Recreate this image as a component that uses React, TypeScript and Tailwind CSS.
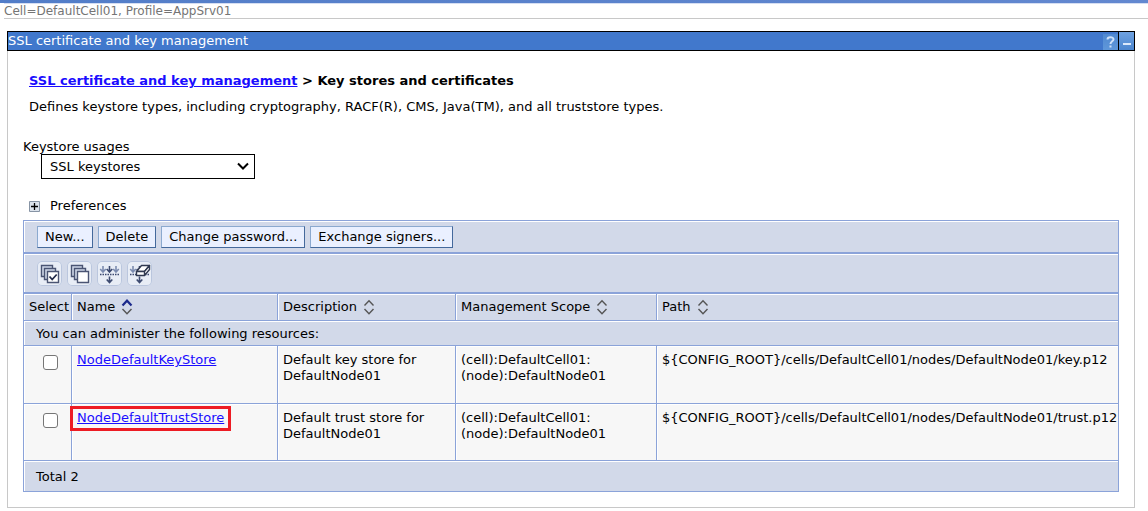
import React from "react";

type Sort = "asc" | "none";

const columns: { name: string; sort: Sort }[] = [
  { name: "Name", sort: "asc" },
  { name: "Description", sort: "none" },
  { name: "Management Scope", sort: "none" },
  { name: "Path", sort: "none" },
];

const rows = [
  {
    name: "NodeDefaultKeyStore",
    description: "Default key store for DefaultNode01",
    path: "${CONFIG_ROOT}/cells/DefaultCell01/nodes/DefaultNode01/key.p12",
    marked: false,
  },
  {
    name: "NodeDefaultTrustStore",
    description: "Default trust store for DefaultNode01",
    path: "${CONFIG_ROOT}/cells/DefaultCell01/nodes/DefaultNode01/trust.p12",
    marked: true,
  },
];

const actions = ["New...", "Delete", "Change password...", "Exchange signers..."];

function SortIcon({ sort }: { sort: Sort }) {
  return (
    <svg width="12" height="16" viewBox="0 0 12 16" fill="none" strokeWidth="1.4" aria-hidden="true">
      <path d="M1.5 6.500 6 1.700l4.500 4.800" stroke={sort === "asc" ? "#1c2a8c" : "#555"} strokeWidth={sort === "asc" ? 2.2 : 1.4} />
      <path d="M1.500 10 6 14.800l4.500-4.800" stroke="#555" />
    </svg>
  );
}

function Sheets({ checked }: { checked: boolean }) {
  return (
    <g stroke="#4a5473" strokeWidth="1.4" fill="#cfd7e8">
      <path d="M4.500 4.500h11v11h-11z" />
      <path d="M7.500 7.500h11v11h-11z" />
      <path d="M10.500 10.500h11v11h-11z" fill="#fff" />
      {checked && <path d="m12.500 15.500 2.700 3 4.500-5" fill="none" stroke="#222b4a" strokeWidth="1.800" />}
    </g>
  );
}

function Arrow({ x, y, color }: { x: number; y: number; color: string }) {
  return <path d={`M${x} ${y}v6M${x - 2.8} ${y + 3}l2.800 3 2.800-3`} stroke={color} strokeWidth="1.600" fill="none" />;
}

function Filter({ clear }: { clear: boolean }) {
  return (
    <g>
      <Arrow x={6} y={5} color="#7c8cb0" />
      <Arrow x={12.5} y={5} color="#3c4a70" />
      {!clear && <Arrow x={19} y={5} color="#7c8cb0" />}
      <path d="M3 13.500h20" stroke="#3c4a70" strokeWidth="1.300" strokeDasharray="1.500 1" />
      <Arrow x={12.5} y={15.5} color="#3c4a70" />
      {clear && (
        <g stroke="#303950" strokeWidth="1.400" fill="#fff" strokeLinejoin="round">
          <path d="m9.500 10.500 5-6h8l-5 6z" />
          <path d="M9.500 10.500h8v4h-8zM17.500 10.500l5-6v4l-5 6z" />
        </g>
      )}
    </g>
  );
}

const tools = [
  { label: "Select all items", icon: <Sheets checked /> },
  { label: "Deselect all items", icon: <Sheets checked={false} /> },
  { label: "Show filter", icon: <Filter clear={false} /> },
  { label: "Clear filter", icon: <Filter clear /> },
];

const band = "border border-[#8ba3d9] bg-[#d2d9e9] shadow-[inset_1px_1px_0_#fff]";
const cell = "border border-[#8ba3d9] pr-0.5 text-left font-normal shadow-[inset_1px_1px_0_#fff]";

export default function App() {
  return (
    <div className="bg-white font-['Verdana','DejaVu_Sans',sans-serif] text-[13px] leading-4 text-black">
      <div className="h-[3px] bg-gradient-to-r from-[#527dc8] to-[#6388d0]" />
      <header className="ml-1 border-t border-b border-t-[#d5def2] border-b-[#c8c8c8] text-xs leading-[14px] text-[#757575]">
        Cell=DefaultCell01, Profile=AppSrv01
      </header>

      <main className="mt-3 mr-[13px] ml-[7px] border-x border-b border-[#c8c8c8]">
        <div className="-mx-px flex h-5 items-stretch border border-black bg-[#4178cc] text-white">
          <h2 className="flex-1 leading-[18px]">SSL certificate and key management</h2>
          <button aria-label="Help" className="mt-0.5 flex w-[15px] items-center justify-center bg-gradient-to-b from-[#5089d0] to-[#5f97da]">
            <svg width="9" height="12" viewBox="0 0 9 12" fill="none" stroke="#cfe1f8" strokeWidth="2" aria-hidden="true">
              <path d="M1.500 3.500C1.500.500 7.500.500 7.500 3.300 7.500 5.300 4.500 5.300 4.500 8M4.500 9.500v2" />
            </svg>
          </button>
          <button aria-label="Minimize" className="flex w-4 items-end justify-center border-l border-black bg-gradient-to-b from-[#6ea1e0] to-[#4c86cf] pb-[5px]">
            <span className="h-0.5 w-2 bg-[#dbe9fb]" />
          </button>
        </div>

        <div className="px-[15px] pt-[22px] pb-[15px]">
          <h1 className="pl-1.5 font-bold">
            <a href="#ssl" className="text-[#1a0dff] underline">SSL certificate and key management</a> &gt; Key stores and certificates
          </h1>
          <p className="mt-2.5 pl-1.5">
            Defines keystore types, including cryptography, RACF(R), CMS, Java(TM), and all truststore types.
          </p>

          <label htmlFor="usages" className="mt-6 block leading-[15px]">Keystore usages</label>
          <div className="relative ml-[18px] w-[214px]">
            <select id="usages" className="block h-[25px] w-full appearance-none border border-black bg-white pl-2">
              <option>SSL keystores</option>
            </select>
            <svg className="pointer-events-none absolute top-2 right-1.5" width="12" height="9" viewBox="0 0 12 9" aria-hidden="true">
              <path d="m1 1.500 5 5 5-5" fill="none" stroke="#000" strokeWidth="2" />
            </svg>
          </div>

          <button className="mt-[19px] flex items-center gap-2.5 pl-1.5">
            <svg width="11" height="11" viewBox="0 0 11 11" aria-hidden="true">
              <path d="M.500.500h10v10H.500z" fill="#dce3ec" stroke="#8794a5" />
              <path d="M5.500 2v7M2 5.500h7" stroke="#000" strokeWidth="1.300" />
            </svg>
            Preferences
          </button>

          <section className="mt-1.5">
            <div className={`flex h-[33px] items-center gap-[5px] pl-[13px] ${band}`}>
              {actions.map((label) => (
                <button key={label} className="h-[22px] border border-t-[#8ba9cf] border-r-[#44699c] border-b-[#44699c] border-l-[#8ba9cf] bg-[#eaf0ff] px-[7px] leading-[19px]">
                  {label}
                </button>
              ))}
            </div>
            <div className={`flex h-10 items-center gap-[5px] pl-[13px] ${band}`}>
              {tools.map(({ label, icon }) => (
                <button key={label} aria-label={label} className="size-[25px] rounded-[5px] bg-[#e8edf6] ring-1 ring-[#bac6de] ring-inset">
                  <svg width="25" height="25" viewBox="0 0 25 25" aria-hidden="true">{icon}</svg>
                </button>
              ))}
            </div>
            <table className="w-full table-fixed border-collapse">
              <colgroup>
                <col className="w-12" />
                <col className="w-[206px]" />
                <col className="w-[178px]" />
                <col className="w-[201px]" />
                <col />
              </colgroup>
              <thead className="bg-[#d2d9e9]">
                <tr className="h-[27px]">
                  <th className={`${cell} pl-[5px]`}>Select</th>
                  {columns.map(({ name, sort }) => (
                    <th key={name} className={`${cell} pl-[5px]`}>
                      <a href="#sort" className="flex items-center gap-1.5">{name} <SortIcon sort={sort} /></a>
                    </th>
                  ))}
                </tr>
              </thead>
              <tbody className="bg-[#f7f7f7]">
                <tr className="h-[25px] bg-[#d2d9e9]">
                  <td colSpan={5} className={`${cell} pt-0.5 pl-3`}>You can administer the following resources:</td>
                </tr>
                {rows.map((row) => (
                  <tr key={row.name} className="h-[57px] align-top first-of-type:h-[25px] nth-2:h-[58px]">
                    <td className={`${cell} pt-[9px]`}>
                      <input type="checkbox" aria-label={row.name} className="ml-[19px] block size-[15px] appearance-none rounded-[3px] border border-[#767676] bg-white" />
                    </td>
                    <td className={`${cell} pt-1.5 pl-[5px]`}>
                      <div className="relative w-fit">
                        <a href="#store" className="text-[#1a0dff] underline">{row.name}</a>
                        {row.marked && <div className="pointer-events-none absolute -inset-x-[7px] -top-1 -bottom-[5px] border-3 border-[#ed1c24]" />}
                      </div>
                    </td>
                    <td className={`${cell} pt-1.5 pl-[5px]`}>{row.description}</td>
                    <td className={`${cell} pt-1.5 pl-[5px]`}>(cell):DefaultCell01:<br />(node):DefaultNode01</td>
                    <td className={`${cell} pt-1.5 pl-[5px]`}>{row.path}</td>
                  </tr>
                ))}
              </tbody>
              <tfoot className="bg-[#d2d9e9]">
                <tr className="h-[31px]">
                  <td colSpan={5} className={`${cell} pt-0.5 pl-3`}>Total 2</td>
                </tr>
              </tfoot>
            </table>
          </section>
        </div>
      </main>
    </div>
  );
}
